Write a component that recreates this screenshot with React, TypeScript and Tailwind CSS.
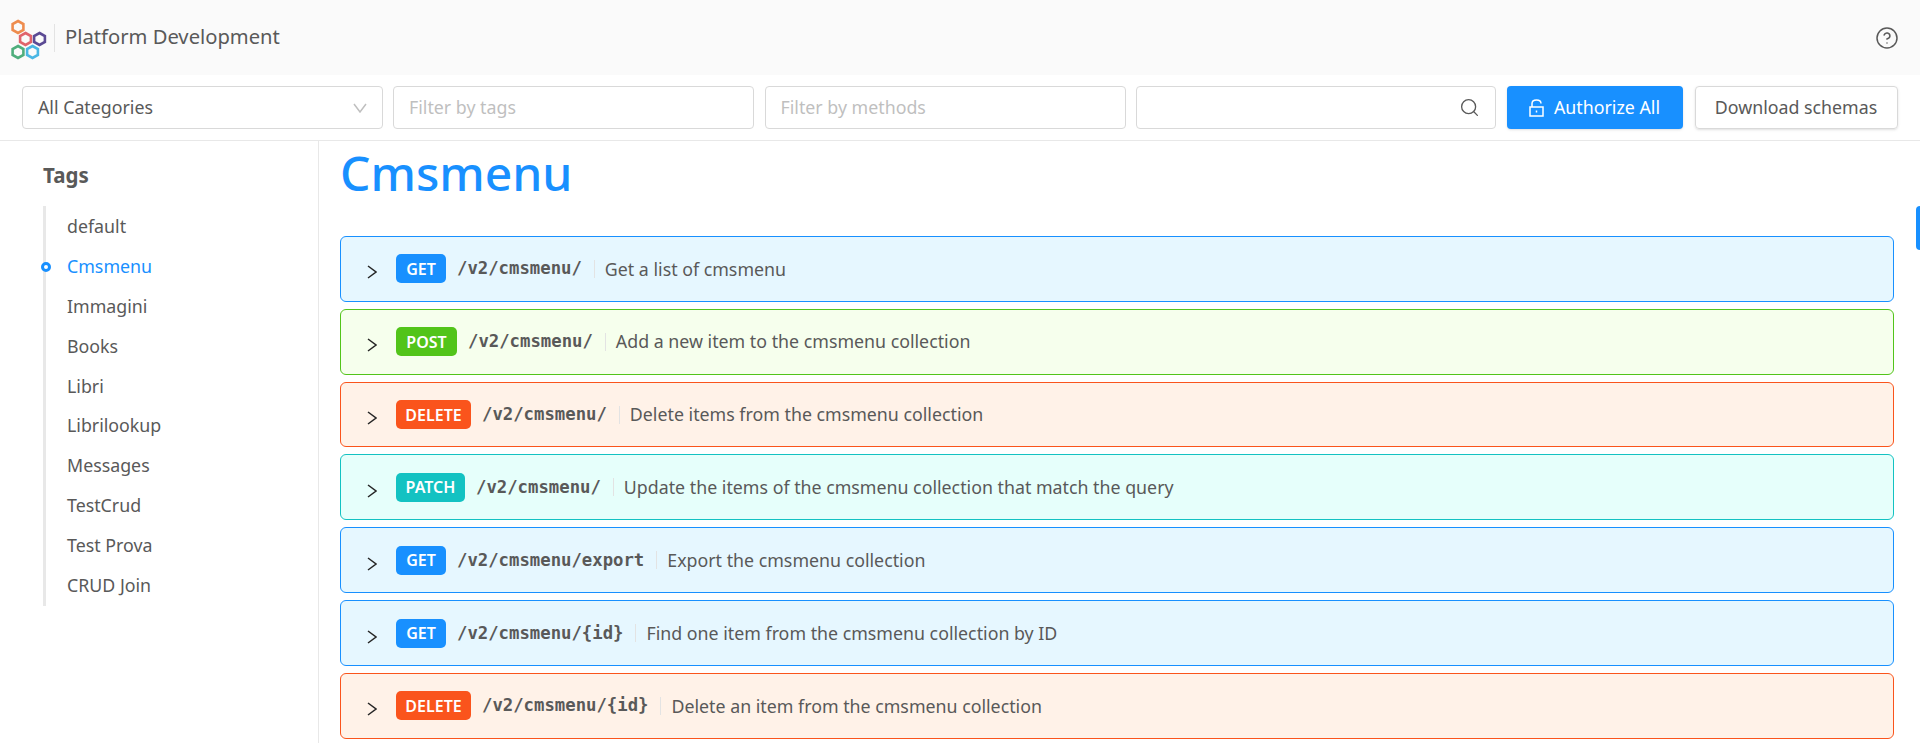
import { CircleHelp, Search } from "lucide-react";

const tags = ["default", "Cmsmenu", "Immagini", "Books", "Libri", "Librilookup", "Messages", "TestCrud", "Test Prova", "CRUD Join"];

const rows = [
  { method: "GET", path: "/v2/cmsmenu/", summary: "Get a list of cmsmenu" },
  { method: "POST", path: "/v2/cmsmenu/", summary: "Add a new item to the cmsmenu collection" },
  { method: "DELETE", path: "/v2/cmsmenu/", summary: "Delete items from the cmsmenu collection" },
  { method: "PATCH", path: "/v2/cmsmenu/", summary: "Update the items of the cmsmenu collection that match the query" },
  { method: "GET", path: "/v2/cmsmenu/export", summary: "Export the cmsmenu collection" },
  { method: "GET", path: "/v2/cmsmenu/{id}", summary: "Find one item from the cmsmenu collection by ID" },
  { method: "DELETE", path: "/v2/cmsmenu/{id}", summary: "Delete an item from the cmsmenu collection" },
];

const methodStyles: Record<string, { row: string; badge: string }> = {
  GET: { row: "bg-[#e6f7ff] border-[#1890ff]", badge: "w-[50px] bg-[#1890ff]" },
  POST: { row: "bg-[#f6ffed] border-[#52c41a]", badge: "w-[61px] bg-[#52c41a]" },
  DELETE: { row: "bg-[#fff2e8] border-[#fa541c]", badge: "w-[75px] bg-[#fa541c]" },
  PATCH: { row: "bg-[#e6fffb] border-[#13c2c2]", badge: "w-[69px] bg-[#13c2c2]" },
};

const Hex = ({ x, y, color }: { x: number; y: number; color: string }) => (
  <polygon
    points={`${x},${y - 6} ${x + 5.4},${y - 3} ${x + 5.4},${y + 3} ${x},${y + 6} ${x - 5.4},${y + 3} ${x - 5.4},${y - 3}`}
    fill="none"
    stroke={color}
    strokeWidth="2.6"
  />
);

const Logo = () => (
  <svg width="48" height="75" viewBox="0 0 48 75" className="shrink-0">
    <Hex x={18} y={27} color="#ee8c4e" />
    <Hex x={25.5} y={39} color="#e0636b" />
    <Hex x={39.5} y={39} color="#5b4a94" />
    <Hex x={18} y={52} color="#4fae7c" />
    <Hex x={32.5} y={52} color="#4ab6e4" />
  </svg>
);

const UnlockIcon = () => (
  <svg width="15" height="18" viewBox="0 0 15 18" fill="none" stroke="currentColor" strokeWidth="1.5" className="shrink-0">
    <rect x="1" y="8" width="13" height="9" />
    <path d="M3 8V4.5C3 2.5 4.5 1 7.5 1S12 2.5 12 4.5" />
    <path d="M7.5 11.5V13.5" />
  </svg>
);

const FilterBox = ({ label }: { label: string }) => (
  <div className="flex h-[43px] w-[361px] items-center rounded border border-[#d9d9d9] px-[15px] text-[17.8px] text-[#bfbfbf]">{label}</div>
);

export default function App() {
  return (
    <div className="relative h-[743px] overflow-hidden bg-white font-['Noto_Sans',sans-serif] text-[#595959]">
      <header className="flex h-[75px] items-center justify-between bg-[#fafafa] pr-[21px]">
        <div className="flex items-center">
          <Logo />
          <div className="ml-[6px] h-[28px] w-px bg-[#e3e3e3]" />
          <span className="ml-[10px] mb-[2px] text-[20.2px]">Platform Development</span>
        </div>
        <CircleHelp size={24} strokeWidth={1.5} />
      </header>

      <div className="flex h-[66px] items-center gap-[10.5px] border-b border-[#e8e8e8] pl-[22px]">
        <div className="flex h-[43px] w-[360.5px] items-center justify-between rounded border border-[#d9d9d9] px-[15px] text-[17.8px]">
          All Categories
          <svg width="14" height="10" viewBox="0 0 14 10" fill="none" stroke="#bfbfbf" strokeWidth="1.5">
            <path d="M1 1L7 9L13 1" />
          </svg>
        </div>
        <FilterBox label="Filter by tags" />
        <FilterBox label="Filter by methods" />
        <div className="flex h-[43px] w-[360px] items-center justify-end rounded border border-[#d9d9d9] pr-[15px]">
          <Search size={21} strokeWidth={1.5} />
        </div>
        <button className="flex h-[43px] w-[176px] items-center justify-center gap-[10px] rounded bg-[#1890ff] text-[17.8px] text-white shadow-sm">
          <UnlockIcon />
          Authorize All
        </button>
        <button className="ml-[1.5px] h-[43px] w-[203px] rounded border border-[#d9d9d9] text-[17.8px] shadow-sm">Download schemas</button>
      </div>

      <div className="flex">
        <aside className="h-[602px] w-[319px] shrink-0 border-r border-[#e8e8e8] pl-[43px]">
          <h2 className="pt-[17px] text-[20.5px] leading-[34px] font-bold">Tags</h2>
          <ul className="relative mt-[14px] border-l-[3px] border-[#e8e8e8] pt-[1px]">
            {tags.map((tag) => (
              <li key={tag} className={`relative h-[39.9px] pl-[21px] text-[17.8px] leading-[39.9px] ${tag === "Cmsmenu" ? "text-[#1890ff]" : ""}`}>
                {tag === "Cmsmenu" && (
                  <span className="absolute top-[15px] left-[-5px] size-[10px] rounded-full border-[3px] border-[#1890ff] bg-white" />
                )}
                {tag}
              </li>
            ))}
          </ul>
        </aside>

        <main className="min-w-0 flex-1 pl-[21px] pr-[26px]">
          <h1 className="h-[95px] text-[48px] leading-[63px] font-medium text-[#1890ff]">Cmsmenu</h1>
          <div className="flex flex-col gap-[7px]">
            {rows.map((row, i) => (
              <div key={i} className={`flex h-[65.83px] shrink-0 items-center rounded-md border pl-[26px] ${methodStyles[row.method].row}`}>
                <svg width="10" height="14" viewBox="0 0 10 14" fill="none" stroke="#262626" strokeWidth="1.5" className="mt-[7px] mr-[19px] shrink-0">
                  <path d="M1 1L9 7L1 13" />
                </svg>
                <span className={`flex h-[29px] items-center justify-center rounded-[5px] text-[16px] font-semibold text-white ${methodStyles[row.method].badge}`}>
                  {row.method}
                </span>
                <span className="mt-[1px] ml-[11px] font-['DejaVu_Sans_Mono',monospace] text-[17.3px] font-bold">{row.path}</span>
                <span className="ml-[12px] h-[18px] w-px bg-[#e3e3e3]" />
                <span className="ml-[10px] text-[17.8px]">{row.summary}</span>
              </div>
            ))}
          </div>
        </main>
      </div>

      <div className="absolute top-[206px] right-0 h-[44px] w-[4px] rounded-l bg-[#1890ff]" />
    </div>
  );
}
